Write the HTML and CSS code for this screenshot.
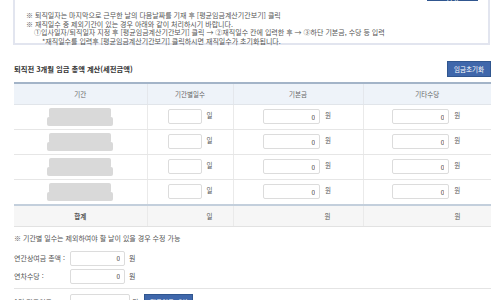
FILE: index.html
```html
<!DOCTYPE html>
<html lang="ko">
<head>
    <meta charset="UTF-8">
    <title>퇴직금 계산</title>
    <link rel="stylesheet" href="styles.css">
</head>
<body>
<div class="page">
    <div class="notice">
        <div class="notice-top">
            <button class="btn">평균임금계산기간보기</button>
        </div>
        <p>※ 퇴직일자는 마지막으로 근무한 날의 다음날짜를 기재 후 [평균임금계산기간보기] 클릭</p>
        <p>※ 재직일수 중 제외기간이 있는 경우 아래와 같이 처리하시기 바랍니다.</p>
        <p class="step">①입사일자/퇴직일자 지정 후 [평균임금계산기간보기] 클릭 → ②재직일수 칸에 입력한 후 → ③하단 기본금, 수당 등 입력</p>
        <p class="step2">*재직일수를 입력후 [평균임금계산기간보기] 클릭하시면 재직일수가 초기화됩니다.</p>
    </div>

    <div class="calc-head">
        <h2>퇴직전 3개월 임금 총액 계산(세전금액)</h2>
        <button class="btn">임금초기화</button>
    </div>

    <table class="wage">
        <colgroup>
            <col style="width:133px">
            <col style="width:86px">
            <col style="width:130px">
            <col>
        </colgroup>
        <thead>
        <tr>
            <th>기간</th>
            <th>기간별일수</th>
            <th>기본금</th>
            <th>기타수당</th>
        </tr>
        </thead>
        <tbody>
        <!-- period dates are masked -->
        <tr>
            <td><div class="mask"><span class="m1"></span><span class="m2"></span></div></td>
            <td><input class="inp inp-day" type="text"> 일</td>
            <td><input class="inp inp-won" type="text" value="0"> 원</td>
            <td><input class="inp inp-won" type="text" value="0"> 원</td>
        </tr>
        <tr>
            <td><div class="mask"><span class="m1"></span><span class="m2"></span></div></td>
            <td><input class="inp inp-day" type="text"> 일</td>
            <td><input class="inp inp-won" type="text" value="0"> 원</td>
            <td><input class="inp inp-won" type="text" value="0"> 원</td>
        </tr>
        <tr>
            <td><div class="mask"><span class="m1"></span><span class="m2"></span></div></td>
            <td><input class="inp inp-day" type="text"> 일</td>
            <td><input class="inp inp-won" type="text" value="0"> 원</td>
            <td><input class="inp inp-won" type="text" value="0"> 원</td>
        </tr>
        <tr>
            <td><div class="mask"><span class="m1"></span><span class="m2"></span></div></td>
            <td><input class="inp inp-day" type="text"> 일</td>
            <td><input class="inp inp-won" type="text" value="0"> 원</td>
            <td><input class="inp inp-won" type="text" value="0"> 원</td>
        </tr>
        </tbody>
        <tfoot>
        <tr>
            <td class="sum">합계</td>
            <td class="unit-day">일</td>
            <td class="unit-won">원</td>
            <td class="unit-won">원</td>
        </tr>
        </tfoot>
    </table>

    <p class="hint">※ 기간별 일수는 제외하여야 할 날이 있을 경우 수정 가능</p>

    <div class="field">
        <label>연간상여금 총액 :</label>
        <input class="inp inp-extra" type="text" value="0"> 원
    </div>
    <div class="field">
        <label>연차수당 :</label>
        <input class="inp inp-extra" type="text" value="0"> 원
    </div>

    <div class="result">
        <label>1일 평균임금 :</label>
        <input class="inp inp-avg" type="text"> 원
        <button class="btn">평균임금 계산</button>
    </div>
</div>
</body>
</html>
```

FILE: styles.css
```css
body {
    margin: 0;
    background: #fff;
    font-family: "Noto Sans CJK KR", "Noto Sans", sans-serif;
    font-size: 7px;
    color: #555;
}
.page {
    margin-top: -17px;
    padding: 0 9px 0 14px;
}
p {
    margin: 0;
}
.btn {
    font-family: inherit;
    font-size: 6.5px;
    color: #fff;
    background-color: #3f67ab;
    border: 1px solid #30568f;
    padding: 0 5px;
    height: 16px;
    cursor: pointer;
}

/* notice box */
.notice {
    box-sizing: border-box;
    margin-left: -1px;
    width: 477px;
    border: 2px solid #e2e5ef;
    padding: 0 0 0 11px;
    line-height: 8.7px;
}
.notice-top {
    display: flex;
    justify-content: flex-end;
    padding: 0 10px 10px 0;
}
.notice-top .btn {
    width: 51px;
    padding: 0;
}
.notice .step {
    padding-left: 8px;
}
.notice .step2 {
    padding-left: 16px;
    margin-bottom: -3px;
}

/* title row */
.calc-head {
    display: flex;
    justify-content: space-between;
    align-items: center;
    margin-top: 16px;
}
.calc-head h2 {
    margin: 0;
    font-size: 7.3px;
    font-weight: bold;
    color: #333;
}
.calc-head .btn {
    width: 44px;
    padding: 0;
}

/* wage table */
.wage {
    width: 477px;
    margin-top: 5px;
    border-collapse: collapse;
    table-layout: fixed;
    border-top: 2px solid #a3b4c8;
    font-size: 6.5px;
}
.wage th {
    height: 20px;
    padding: 0;
    font-weight: normal;
    color: #666;
    background-color: #eef3f9;
    border-left: 1px solid #e4e7ec;
    border-bottom: 1px solid #e1e5ea;
}
.wage th:first-child, .wage td:first-child {
    border-left: none;
}
.wage td {
    height: 24px;
    padding: 0;
    text-align: center;
    border-left: 1px solid #eaeaea;
    border-bottom: 1px solid #e6e6e6;
    color: #555;
}
.wage tbody tr:last-child td {
    border-bottom: 2px solid #c3cfdc;
}
.wage tfoot td {
    height: 20px;
    background-color: #f6f6f6;
    border-bottom: 1px solid #e2e2e2;
}
.wage tfoot .sum {
    font-weight: bold;
    color: #555;
}
.wage .unit-day {
    text-align: left;
    padding-left: 59px;
}
.wage .unit-won {
    text-align: left;
    padding-left: 91px;
}
.mask {
    display: flex;
    flex-direction: column;
    align-items: center;
}
.mask span {
    display: block;
    background-color: #d9d9d9;
    border-radius: 2px;
}
.mask .m1 {
    width: 62px;
    height: 10px;
}
.mask .m2 {
    width: 66px;
    height: 9px;
    margin-top: -1px;
}

/* inputs */
.inp {
    box-sizing: border-box;
    height: 15px;
    border: 1px solid #dcdcdc;
    border-radius: 2px;
    font-family: inherit;
    font-size: 6.5px;
    color: #444;
    padding: 0 4px;
    text-align: right;
    vertical-align: middle;
}
.inp-day {
    width: 34px;
    margin: 0 3px 0 0;
}
.inp-won {
    width: 57px;
    margin: 0 3px 0 -2px;
}
.inp-extra {
    width: 55px;
    margin-right: 4px;
}
.inp-avg {
    width: 60px;
    margin-right: 2px;
}

.hint {
    margin: 7px 0 0;
    line-height: 9px;
}
.field {
    display: flex;
    align-items: center;
    margin-top: 8px;
}
.field + .field {
    margin-top: 3px;
}
.field label, .result label {
    width: 56px;
}
.result {
    display: flex;
    align-items: center;
    margin-top: 4px;
    padding-top: 5px;
    border-top: 1px solid #e4e4e4;
}
.result .btn {
    margin-left: 6px;
    width: 49px;
    padding: 0;
}
```
